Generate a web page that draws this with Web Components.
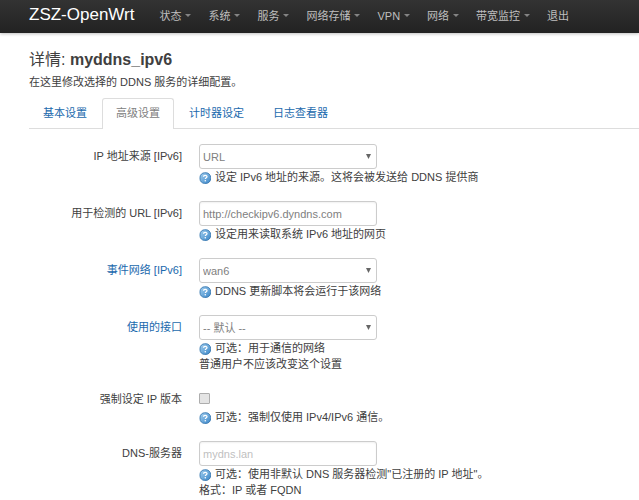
<!DOCTYPE html>
<html lang="zh-CN">
<head>
<meta charset="utf-8">
<meta name="viewport" content="width=device-width, initial-scale=1">
<title>ZSZ-OpenWrt - 动态 DNS</title>
<style>
  body {
    margin: 0;
    background: #fff;
    color: #404040;
    font: 11px/16px "Liberation Sans", "Noto Sans CJK SC", sans-serif;
  }
</style>
</head>
<body>
<ddns-page></ddns-page>

<script>
class NavBar extends HTMLElement {
  constructor() {
    super();
    this.attachShadow({ mode: 'open' });
    this.shadowRoot.innerHTML = `
      <style>
        :host {
          display: block;
          background: linear-gradient(#333, #222);
          box-shadow: 0 1px 3px rgba(0, 0, 0, 0.25);
        }
        nav {
          display: flex;
          align-items: center;
          height: 33px;
          padding: 0 29px;
          gap: 25px;
          white-space: nowrap;
        }
        .brand {
          color: #fff;
          font-size: 17px;
          line-height: 20px;
          padding-bottom: 4px;
          text-decoration: none;
        }
        .menu {
          display: flex;
          gap: 17px;
          padding-bottom: 2px;
        }
      </style>
      <nav>
        <a class="brand" href="#">${this.getAttribute('brand')}</a>
        <div class="menu"><slot></slot></div>
      </nav>
    `;
  }
}

class NavItem extends HTMLElement {
  constructor() {
    super();
    this.attachShadow({ mode: 'open' });
    this.shadowRoot.innerHTML = `
      <style>
        :host { display: block; }
        a {
          display: flex;
          align-items: center;
          gap: 4px;
          color: #bfbfbf;
          text-decoration: none;
        }
        a:hover { color: #fff; }
        .caret {
          border: 3px solid transparent;
          border-top-color: #848484;
          border-bottom: 0;
        }
        :host([plain]) .caret { display: none; }
      </style>
      <a href="#"><slot></slot><span class="caret"></span></a>
    `;
  }
}

class TabBar extends HTMLElement {
  constructor() {
    super();
    this.attachShadow({ mode: 'open' });
    this.shadowRoot.innerHTML = `
      <style>
        :host {
          display: flex;
          gap: 1px;
          border-bottom: 1px solid #ddd;
        }
      </style>
      <slot></slot>
    `;
  }
}

class TabItem extends HTMLElement {
  constructor() {
    super();
    this.attachShadow({ mode: 'open' });
    this.shadowRoot.innerHTML = `
      <style>
        :host {
          display: block;
          margin-bottom: -1px;
        }
        a {
          display: block;
          padding: 6px 13px 8px;
          border: 1px solid transparent;
          border-bottom: 0;
          border-radius: 3px 3px 0 0;
          color: #1a69ad;
          text-decoration: none;
        }
        :host([active]) a {
          border-color: #ddd;
          background: #fff;
          color: #808080;
        }
      </style>
      <a href="#"><slot></slot></a>
    `;
  }
}

class HelpIcon extends HTMLElement {
  constructor() {
    super();
    this.attachShadow({ mode: 'open' });
    this.shadowRoot.innerHTML = `
      <style>
        :host {
          display: inline-block;
          width: 12px;
          height: 12px;
          margin-right: 4px;
          vertical-align: -3px;
        }
        svg { display: block; }
      </style>
      <svg width="12" height="12" viewBox="0 0 12 12" aria-hidden="true">
        <defs>
          <linearGradient id="g" x1="0" y1="0" x2="1" y2="1">
            <stop offset="0" stop-color="#a4d0f0"/>
            <stop offset="1" stop-color="#3a86c8"/>
          </linearGradient>
        </defs>
        <rect x="1" y=".8" width="10.6" height="10.6" rx="4.6" fill="url(#g)" stroke="#3577b0" stroke-width=".9"/>
        <path d="M4.5 4.8C4.5 2.9 8 2.9 8 4.7C8 5.8 6.3 5.8 6.3 7.1" fill="none" stroke="#fff" stroke-width="1.3"/>
        <circle cx="6.3" cy="8.8" r=".8" fill="#fff"/>
      </svg>
    `;
  }
}

// type: select | text | checkbox
class ConfigField extends HTMLElement {
  constructor() {
    super();
    this.attachShadow({ mode: 'open' });
    this.render();
  }

  control() {
    const value = this.getAttribute('value') || '';
    const hint = this.getAttribute('placeholder') || '';
    switch (this.getAttribute('type')) {
      case 'select':
        return `
          <select id="control"><option>${value}</option></select>
          <svg class="arrow" width="5" height="5" viewBox="0 0 5 5" aria-hidden="true"><path d="M0 0h5L2.5 5z" fill="#666"/></svg>
        `;
      case 'checkbox':
        return `<input id="control" type="checkbox">`;
      default:
        return `<input id="control" type="text" value="${value}" placeholder="${hint}">`;
    }
  }

  render() {
    const title = this.getAttribute('label');
    const label = this.hasAttribute('href') ? `<a href="${this.getAttribute('href')}">${title}</a>` : title;

    this.shadowRoot.innerHTML = `
      <style>
        :host {
          display: grid;
          grid-template-columns: 153px 1fr;
          column-gap: 17px;
        }
        label {
          padding-top: 4px;
          text-align: right;
        }
        a {
          color: #1a69ad;
          text-decoration: none;
        }
        .control {
          display: grid;
          grid-template-columns: 178px;
          align-items: center;
          height: 25px;
        }
        select, input[type="text"] {
          grid-area: 1 / 1;
          box-sizing: border-box;
          width: 100%;
          height: 25px;
          margin: 0;
          padding: 2px 3px;
          border: 1px solid #ccc;
          border-radius: 3px;
          background: #fff;
          color: #808080;
          font: inherit;
          appearance: none;
        }
        input[type="text"] { box-shadow: inset 0 1px 2px rgba(0, 0, 0, 0.06); }
        input::placeholder { color: #bfbfbf; }
        .arrow {
          grid-area: 1 / 1;
          justify-self: end;
          margin-right: 6px;
          pointer-events: none;
        }
        input[type="checkbox"] {
          box-sizing: border-box;
          width: 11px;
          height: 11px;
          margin: 0;
          border: 1px solid #adadad;
          border-radius: 1px;
          background: #e4e4e4;
          appearance: none;
        }
        input[type="checkbox"]:checked { background: #1a69ad; }
        :host([type="checkbox"]) label { padding-top: 3px; }
        :host([type="checkbox"]) .control { height: 21px; }
      </style>
      <label for="control">${label}</label>
      <div>
        <div class="control">${this.control()}</div>
        <div class="help"><help-icon></help-icon><slot></slot></div>
      </div>
    `;
  }
}

class DdnsPage extends HTMLElement {
  constructor() {
    super();
    this.attachShadow({ mode: 'open' });
    this.shadowRoot.innerHTML = `
      <style>
        :host { display: block; }
        main { padding: 17px 0 16px 29px; }
        h2 {
          margin: 0;
          font-size: 16px;
          line-height: 20px;
          font-weight: normal;
        }
        p { margin: 4px 0 8px; }
        form {
          display: flex;
          flex-direction: column;
          gap: 16px;
          padding-top: 15px;
        }
      </style>
      <nav-bar brand="ZSZ-OpenWrt">
        <nav-item>状态</nav-item>
        <nav-item>系统</nav-item>
        <nav-item>服务</nav-item>
        <nav-item>网络存储</nav-item>
        <nav-item>VPN</nav-item>
        <nav-item>网络</nav-item>
        <nav-item>带宽监控</nav-item>
        <nav-item plain>退出</nav-item>
      </nav-bar>
      <main>
        <h2>详情: <strong>myddns_ipv6</strong></h2>
        <p>在这里修改选择的 DDNS 服务的详细配置。</p>
        <tab-bar>
          <tab-item>基本设置</tab-item>
          <tab-item active>高级设置</tab-item>
          <tab-item>计时器设定</tab-item>
          <tab-item>日志查看器</tab-item>
        </tab-bar>
        <form>
          <config-field type="select" label="IP 地址来源 [IPv6]" value="URL">设定 IPv6 地址的来源。这将会被发送给 DDNS 提供商</config-field>
          <config-field type="text" label="用于检测的 URL [IPv6]" value="http://checkipv6.dyndns.com">设定用来读取系统 IPv6 地址的网页</config-field>
          <config-field type="select" label="事件网络 [IPv6]" href="#network" value="wan6">DDNS 更新脚本将会运行于该网络</config-field>
          <config-field type="select" label="使用的接口" href="#interface" value="-- 默认 --">可选：用于通信的网络<br>普通用户不应该改变这个设置</config-field>
          <config-field type="checkbox" label="强制设定 IP 版本">可选：强制仅使用 IPv4/IPv6 通信。</config-field>
          <config-field type="text" label="DNS-服务器" placeholder="mydns.lan">可选：使用非默认 DNS 服务器检测"已注册的 IP 地址"。<br>格式：IP 或者 FQDN</config-field>
        </form>
      </main>
    `;
  }
}

customElements.define('nav-bar', NavBar);
customElements.define('nav-item', NavItem);
customElements.define('tab-bar', TabBar);
customElements.define('tab-item', TabItem);
customElements.define('help-icon', HelpIcon);
customElements.define('config-field', ConfigField);
customElements.define('ddns-page', DdnsPage);
</script>
</body>
</html>
